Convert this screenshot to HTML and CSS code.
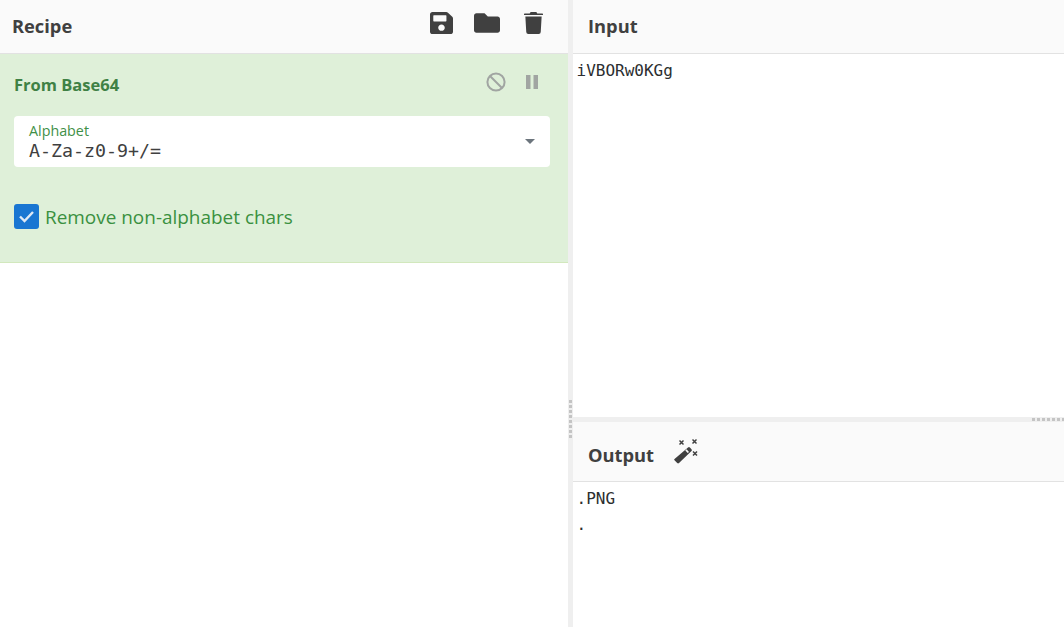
FILE: index.html
```html
<!DOCTYPE html>
<html lang="en">
<head>
<meta charset="utf-8">
<title>Recipe</title>
<link rel="stylesheet" href="styles.css">
</head>
<body>
<div class="app">
  <section class="recipe">
    <header class="head recipe-head">
      <h2 class="title">Recipe</h2>
      <div class="tools">
        <svg class="tool" width="23" height="22" viewBox="0 32 448 448" preserveAspectRatio="none"><path fill="#404040" d="M433.900 129.900l-83.900-83.900A48 48 0 0 0 316.100 32H48C21.500 32 0 53.500 0 80v352c0 26.500 21.500 48 48 48h352c26.500 0 48-21.500 48-48V163.900a48 48 0 0 0-14.100-34zM224 416c-35.300 0-64-28.700-64-64s28.700-64 64-64 64 28.700 64 64-28.700 64-64 64zm96-304.500V212c0 6.600-5.400 12-12 12H76c-6.600 0-12-5.400-12-12V108c0-6.600 5.400-12 12-12h228.500c3.200 0 6.200 1.300 8.500 3.500l3.500 3.500c2.200 2.300 3.500 5.300 3.500 8.500z"/></svg>
        <svg class="tool folder" width="26" height="26" viewBox="0 0 512 512"><path fill="#404040" d="M464 128H272l-54.600-54.600c-6-6-14.100-9.400-22.600-9.400H48C21.500 64 0 85.500 0 112v288c0 26.500 21.500 48 48 48h416c26.500 0 48-21.500 48-48V176c0-26.500-21.500-48-48-48z"/></svg>
        <svg class="tool trash" width="19" height="22" viewBox="0 0 448 512" preserveAspectRatio="none"><path fill="#404040" d="M432 32H312l-9.400-18.700A24 24 0 0 0 281.100 0H166.800a23.700 23.700 0 0 0-21.400 13.300L136 32H16A16 16 0 0 0 0 48v16a8 8 0 0 0 8 8h432a8 8 0 0 0 8-8V48a16 16 0 0 0-16-16zM53.200 467a48 48 0 0 0 47.900 45h245.800a48 48 0 0 0 47.900-45L416 104H32z"/></svg>
      </div>
    </header>
    <div class="op">
      <div class="op-head">
        <h3 class="op-title">From Base64</h3>
        <div class="op-tools">
          <svg width="22" height="22" viewBox="0 0 22 22"><circle cx="11" cy="11" r="8.600" fill="none" stroke="#a1a5a2" stroke-width="2"/><path d="M5 5l12 12" stroke="#a1a5a2" stroke-width="2"/></svg>
          <svg class="pause" width="14" height="14" viewBox="0 0 14 14"><path fill="#a1a5a2" d="M1 0h4.500v14H1zM8.500 0H13v14H8.500z"/></svg>
        </div>
      </div>
      <div class="field">
        <div class="field-text">
          <label class="field-label">Alphabet</label>
          <div class="field-value">A-Za-z0-9+/=</div>
        </div>
        <span class="caret"></span>
      </div>
      <div class="check">
        <span class="box"><svg width="25" height="25" viewBox="0 0 25 25"><path d="M6 12.500l4.500 4.500 8.500-9" fill="none" stroke="#dfe9f5" stroke-width="2.400"/></svg></span>
        <span class="check-label">Remove non-alphabet chars</span>
      </div>
    </div>
  </section>
  <div class="gutter-v"><span class="grip-v"></span></div>
  <section class="io">
    <div class="input-pane">
      <header class="head">
        <h2 class="title io-title">Input</h2>
      </header>
      <pre class="text">iVBORw0KGg</pre>
    </div>
    <div class="gutter-h"><span class="grip-h"></span></div>
    <div class="output-pane">
      <header class="head out-head">
        <h2 class="title io-title">Output</h2>
        <svg class="wand" width="26" height="26" viewBox="0 0 26 26">
          <path fill="#404040" d="M1.500 21L15 9.500q1-.9 1.900 0l1.600 1.700q.9 1 0 1.900L6 25q-.9.800-1.800 0l-2.700-2.700q-.800-.8 0-1.300z"/>
          <path fill="#fafafa" d="M12.300 12.500l1.300-1.200 2.400 2.600-1.300 1.200z"/>
          <path stroke="#404040" stroke-width="1.500" d="M6.500 2.500l4 4M10.500 2.500l-4 4M19.500 1.500l4 4M23.500 1.500l-4 4M20 13.500l4 4M24 13.500l-4 4"/>
        </svg>
      </header>
      <pre class="text out-text">.PNG
.</pre>
    </div>
  </section>
</div>
</body>
</html>
```
FILE: styles.css
```css
* { box-sizing: border-box; }
html, body { margin: 0; height: 100%; }
body { background: #fff; color: #404040; font-family: "Open Sans", "Noto Sans", sans-serif; overflow: hidden; }
.app { display: grid; grid-template-columns: 568px 5px 1fr; height: 627px; }
.head { display: flex; align-items: center; height: 54px; background: #fafafa; border-bottom: 1px solid #e2e2e2; }
.title { margin: 0 0 2px; font-size: 18.300px; font-weight: 700; color: #404040; }
.recipe-head { justify-content: space-between; padding: 0 25px 0 12px; }
.tools { display: flex; align-items: center; gap: 21px; margin-top: -7px; }
.tool { display: block; }
.tool.trash { margin-left: 3px; }
.op { height: 209px; background: #dff0d9; border-bottom: 1px solid #d2e8bd; padding: 0 18px 0 14px; }
.op-head { display: flex; align-items: center; justify-content: space-between; height: 62px; }
.op-title { margin: 0 0 2px; font-size: 16.500px; font-weight: 700; color: #3f8145; }
.op-tools { display: flex; align-items: center; gap: 18px; padding-right: 11px; margin-top: -7px; }
.op-tools svg { display: block; }
.field { display: flex; align-items: center; justify-content: space-between; height: 51px; background: #fff; border-radius: 4px; padding: 0 15px 0 15px; }
.field-text { display: flex; flex-direction: column; padding-top: 2px; }
.field-label { font-size: 14.300px; line-height: 16px; margin-top: -1px; color: #3f9048; }
.field-value { font-family: "DejaVu Sans Mono", monospace; font-size: 18.300px; line-height: 23px; color: #404040; }
.caret { width: 0; height: 0; border-left: 5px solid transparent; border-right: 5px solid transparent; border-top: 5px solid #6c757d; }
.check { display: flex; align-items: flex-start; gap: 6px; margin-top: 37px; }
.box { display: block; width: 25px; height: 25px; background: #1976d2; border-radius: 3px; }
.box svg { display: block; }
.check-label { font-size: 18.950px; line-height: 25px; color: #3a9040; padding-top: 1px; }
.gutter-v { position: relative; background: #efefef; }
.grip-v { position: absolute; left: 1px; top: 400px; width: 3px; height: 40px; background: repeating-linear-gradient(to bottom, #c4c4c4 0 3px, transparent 3px 5px); }
.io { display: flex; flex-direction: column; min-width: 0; }
.input-pane { height: 417px; }
.io-title { padding-left: 15px; font-size: 18.300px; }
.text { margin: 0; padding: 6px 4px 6px 3.500px; font-family: "DejaVu Sans Mono", monospace; font-size: 16px; line-height: 22px; color: #2c2e30; }
.out-text { line-height: 26px; padding-top: 4px; }
.gutter-h { position: relative; height: 5px; background: #efefef; }
.grip-h { position: absolute; right: 0; top: 1px; width: 32px; height: 3px; background: repeating-linear-gradient(to right, #c4c4c4 0 3px, transparent 3px 5px); }
.out-head { height: 60px; gap: 19px; }
.out-head .io-title { margin: 6px 0 0; }
.wand { display: block; margin-top: -2px; }
```
